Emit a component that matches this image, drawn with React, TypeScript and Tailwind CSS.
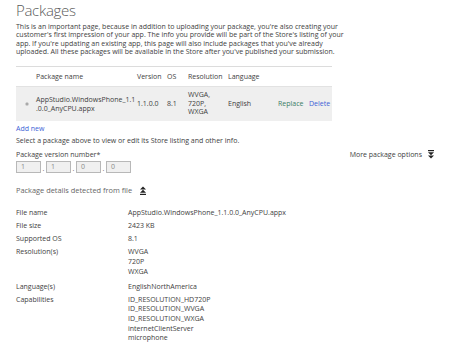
import React from 'react';

const font = { fontFamily: '"Open Sans", "Noto Sans", sans-serif' };

function DoubleArrow({ up }: { up?: boolean }) {
  return (
    <svg width="6" height="9" viewBox="0 0 6 9" className={up ? 'rotate-180' : ''}>
      <rect x="0" y="0" width="6" height="1.2" fill="#222" />
      <path d="M0 2.2 L6 2.2 L3 5.2 Z" fill="#222" />
      <path d="M0 5.6 L6 5.6 L3 8.6 Z" fill="#222" />
    </svg>
  );
}

const details: [string, string[]][] = [
  ['File name', ['AppStudio.WindowsPhone_1.1.0.0_AnyCPU.appx']],
  ['File size', ['2423 KB']],
  ['Supported OS', ['8.1']],
  ['Resolution(s)', ['WVGA', '720P', 'WXGA']],
  ['Language(s)', ['EnglishNorthAmerica']],
  ['Capabilities', ['ID_RESOLUTION_HD720P', 'ID_RESOLUTION_WVGA', 'ID_RESOLUTION_WXGA', 'internetClientServer', 'microphone']],
];

export default function App() {
  return (
    <div className="w-[471px] h-[353px] overflow-hidden bg-white pl-[16px] text-[#3e3e3e]" style={font}>
      <h1 className="text-[15px] leading-[20px] font-light text-[#5a5a5a] tracking-[-0.3px]">Packages</h1>

      {/* intro */}
      <p className="mt-[3px] text-[7px] leading-[8.3px] whitespace-nowrap">
        This is an important page, because in addition to uploading your package, you're also creating your
        <br />
        customer's first impression of your app. The info you provide will be part of the Store's listing of your
        <br />
        app. If you're updating an existing app, this page will also include packages that you've already
        <br />
        uploaded. All these packages will be available in the Store after you've published your submission.
      </p>

      {/* packages table */}
      <div className="mt-[10px] w-[316px] border-t border-[#dcdcdc] text-[7px]">
        <div className="grid grid-cols-[20px_101px_30px_21px_40px_50px_31px_23px] h-[19px] items-center pt-[1px]">
          <span />
          <span>Package name</span>
          <span>Version</span>
          <span>OS</span>
          <span>Resolution</span>
          <span>Language</span>
          <span />
          <span />
        </div>
        <div className="grid grid-cols-[20px_101px_30px_21px_40px_50px_31px_23px] h-[35px] items-center bg-[#efefef] border-t border-[#e2e2e2]">
          <span className="flex justify-center pl-[1px]">
            <span className="w-[4px] h-[4px] rounded-full bg-[#9a9a9a] border border-[#cfcfcf]" />
          </span>
          <span className="leading-[9px]">
            AppStudio.WindowsPhone_1.1
            <br />
            .0.0_AnyCPU.appx
          </span>
          <span>1.1.0.0</span>
          <span>8.1</span>
          <span className="leading-[8.5px]">
            WVGA,
            <br />
            720P,
            <br />
            WXGA
          </span>
          <span>English</span>
          <span className="text-[#3a7d66]">Replace</span>
          <span className="text-[#3d5fd6]">Delete</span>
        </div>
      </div>

      <div className="mt-[3px] text-[7px] leading-[9px] text-[#3d62d6]">Add new</div>
      <div className="mt-[3px] text-[7px] leading-[9px]">Select a package above to view or edit its Store listing and other info.</div>

      {/* version number */}
      <div className="flex items-start w-[418px] mt-[5px]">
        <div className="flex-1">
          <div className="text-[7px] leading-[9px]">Package version number*</div>
          <div className="flex items-end mt-[2px] text-[7px] text-[#8a8a8a]">
            {['1', '1', '0', '0'].map((v, i) => (
              <React.Fragment key={i}>
                {i > 0 && <span className="w-[5px] text-center text-[#666] leading-[9px]">.</span>}
                <div className="w-[25px] h-[12px] bg-[#f0f0f0] border border-[#b8b8b8] pl-[4px] leading-[10px]">{v}</div>
              </React.Fragment>
            ))}
          </div>
        </div>
        <div className="flex items-center gap-[6px] text-[7px] leading-[9px]">
          <span>More package options</span>
          <DoubleArrow />
        </div>
      </div>

      {/* detected details */}
      <div className="flex items-center gap-[8px] mt-[12px] text-[7.4px] leading-[10px] text-[#666]">
        <span>Package details detected from file</span>
        <DoubleArrow up />
      </div>

      <div className="mt-[13px] flex flex-col gap-[3.3px] text-[7px] leading-[9.7px]">
        {details.map(([label, values]) => (
          <div key={label} className={`flex ${label === 'Language(s)' ? 'mt-[2px]' : ''}`}>
            <span className="w-[112px] shrink-0">{label}</span>
            <span className="flex flex-col">
              {values.map((v) => (
                <span key={v}>{v}</span>
              ))}
            </span>
          </div>
        ))}
      </div>
    </div>
  );
}
